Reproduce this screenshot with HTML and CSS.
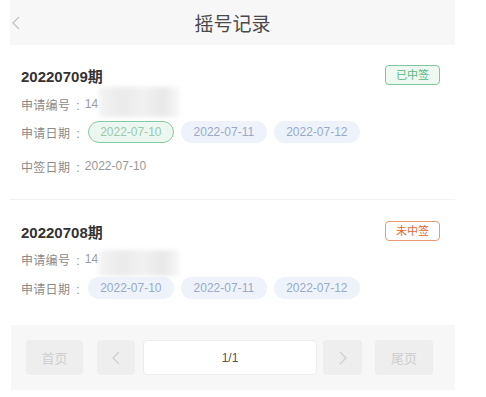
FILE: index.html
```html
<!DOCTYPE html>
<html lang="zh-CN">
<head>
    <meta charset="UTF-8">
    <meta name="viewport" content="width=device-width, initial-scale=1.0">
    <title>摇号记录</title>
    <link rel="stylesheet" href="styles.css">
</head>
<body>
    <div class="page">
        <!-- Header -->
        <div class="header">
            <span class="back">
                <svg width="10" height="14" viewBox="0 0 10 14"><path d="M8 1 L2 7 L8 13" fill="none" stroke="#c4c4c4" stroke-width="1.4"/></svg>
            </span>
            <div class="title">摇号记录</div>
        </div>

        <!-- Records -->
        <div class="record">
            <div class="record-head">
                <div class="period">20220709期</div>
                <span class="badge win">已中签</span>
            </div>
            <div class="row"><span class="label">申请编号<i class="colon">:</i></span><span class="value">14</span></div>
            <div class="mask"></div>
            <div class="row dates">
                <span class="label">申请日期<i class="colon">:</i></span>
                <span class="pill hit">2022-07-10</span>
                <span class="pill">2022-07-11</span>
                <span class="pill">2022-07-12</span>
            </div>
            <div class="row last"><span class="label">中签日期<i class="colon">:</i></span><span class="value">2022-07-10</span></div>
        </div>

        <div class="record second">
            <div class="record-head">
                <div class="period">20220708期</div>
                <span class="badge lose">未中签</span>
            </div>
            <div class="row"><span class="label">申请编号<i class="colon">:</i></span><span class="value">14</span></div>
            <div class="mask"></div>
            <div class="row dates">
                <span class="label">申请日期<i class="colon">:</i></span>
                <span class="pill">2022-07-10</span>
                <span class="pill">2022-07-11</span>
                <span class="pill">2022-07-12</span>
            </div>
        </div>

        <!-- Pager -->
        <div class="pager">
            <span class="pg-btn wide">首页</span>
            <span class="pg-btn narrow">
                <svg width="10" height="14" viewBox="0 0 10 14"><path d="M8 1 L2 7 L8 13" fill="none" stroke="#cfcfcf" stroke-width="1.3"/></svg>
            </span>
            <div class="pg-input">1/1</div>
            <span class="pg-btn narrow next">
                <svg width="10" height="14" viewBox="0 0 10 14"><path d="M2 1 L8 7 L2 13" fill="none" stroke="#cfcfcf" stroke-width="1.3"/></svg>
            </span>
            <span class="pg-btn wide last">尾页</span>
        </div>
    </div>
</body>
</html>
```

FILE: styles.css
```css
/* General styles */
body {
    margin: 0;
    background: #fff;
    font-family: "Liberation Sans", "Noto Sans CJK SC", sans-serif;
    color: #333;
}

.page {
    width: 445px;
    margin-left: 10px;
}

/* Header */
.header {
    height: 45px;
    background: #f7f7f7;
    display: flex;
    align-items: center;
    justify-content: center;
    position: relative;
}

.header .back {
    position: absolute;
    left: 1px;
    top: 16px;
    height: 14px;
    line-height: 0;
}

.header .title {
    font-size: 19px;
    color: #4a4a4a;
}

/* Records */
.record {
    position: relative;
    padding: 20px 15px 23px 11px;
    border-bottom: 1px solid #f1f1f1;
}

.record.second {
    padding-top: 21px;
    border-bottom: none;
    padding-bottom: 26px;
}

.record-head {
    display: flex;
    justify-content: space-between;
    align-items: center;
    height: 20px;
}

.period {
    font-size: 15px;
    font-weight: bold;
    color: #333;
}

.badge {
    font-size: 11px;
    line-height: 18px;
    padding: 0 10px;
    border-radius: 4px;
}

.badge.win {
    border: 1px solid #7fc79a;
    background: #eef9f2;
    color: #5ab87f;
}

.badge.lose {
    border: 1px solid #e99a76;
    background: #fff;
    color: #e2692f;
}

.row {
    margin-top: 9px;
    height: 20px;
    display: flex;
    align-items: center;
    font-size: 12px;
}

.record.second .row {
    margin-top: 8px;
}

.row .label {
    color: #8a8a8a;
    letter-spacing: 0.3px;
}

.row .colon {
    font-style: normal;
    margin: 0 5px 0 6px;
}

.row .value {
    color: #999;
}

.row.dates {
    height: 22px;
    margin-top: 7px;
}

.row.last {
    margin-top: 13px;
}

.pill {
    display: inline-block;
    width: 86px;
    height: 22px;
    line-height: 22px;
    text-align: center;
    border-radius: 11px;
    background: #eef3fb;
    color: #98aac8;
    margin-left: 7px;
    box-sizing: border-box;
}

.row.dates .label + .pill {
    margin-left: 3px;
}

.pill.hit {
    background: #edf7f1;
    border: 1px solid #86c9a0;
    color: #96cba9;
    line-height: 20px;
}

/* blurred part of the application number */
.mask {
    position: absolute;
    width: 80px;
    height: 30px;
    left: 89px;
    top: 42px;
    background: linear-gradient(90deg, #f3f3f3, #eaeaea 30%, #f1f1f1 55%, #e8e8e8 80%, #f7f7f7);
    filter: blur(2px);
}

.record.second .mask {
    top: 50px;
    height: 26px;
}

/* Pager */
.pager {
    height: 65px;
    margin-left: 1px;
    background: #f7f7f7;
    display: flex;
    align-items: center;
    padding: 0 22px 0 15px;
}

.pg-btn {
    height: 35px;
    background: #eeeeee;
    border-radius: 4px;
    display: flex;
    align-items: center;
    justify-content: center;
    font-size: 13px;
    color: #cfcfcf;
}

.pg-btn.wide {
    width: 57px;
    margin-right: 14px;
}

.pg-btn.narrow {
    width: 38px;
}

.pg-btn.next {
    width: 39px;
    margin-left: 6px;
}

.pg-btn.wide.last {
    width: 58px;
    margin-right: 0;
    margin-left: 13px;
}

.pg-input {
    flex: 1;
    height: 33px;
    margin-left: 8px;
    background: #fff;
    border: 1px solid #ececec;
    border-radius: 4px;
    display: flex;
    align-items: center;
    justify-content: center;
    font-size: 12px;
    color: #555;
}
```
